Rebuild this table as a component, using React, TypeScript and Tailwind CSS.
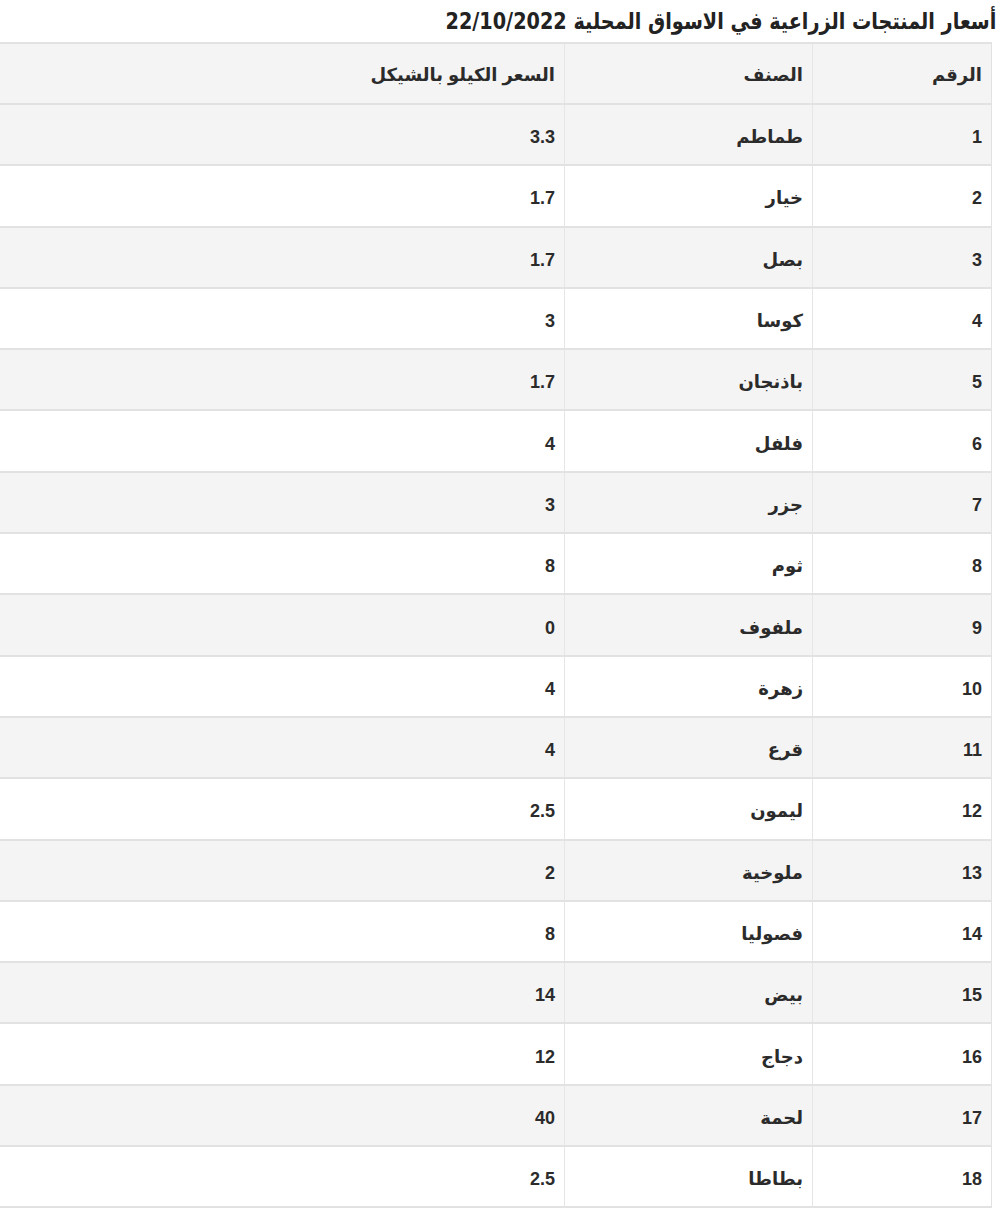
const rows: [number, string, string][] = [
  [1, "طماطم", "3.3"],
  [2, "خيار", "1.7"],
  [3, "بصل", "1.7"],
  [4, "كوسا", "3"],
  [5, "باذنجان", "1.7"],
  [6, "فلفل", "4"],
  [7, "جزر", "3"],
  [8, "ثوم", "8"],
  [9, "ملفوف", "0"],
  [10, "زهرة", "4"],
  [11, "قرع", "4"],
  [12, "ليمون", "2.5"],
  [13, "ملوخية", "2"],
  [14, "فصوليا", "8"],
  [15, "بيض", "14"],
  [16, "دجاج", "12"],
  [17, "لحمة", "40"],
  [18, "بطاطا", "2.5"],
];

const App = () => {
  return (
    <div
      dir="rtl"
      className="w-[1000px] h-[1217px] bg-white overflow-hidden text-[#2b2b2b]"
      style={{ fontFamily: '"Liberation Sans", "DejaVu Sans", sans-serif' }}
    >
      {/* Title */}
      <h1
        className="pr-[4px] pt-[6px] h-[42px] text-[23px] font-bold leading-[30px] text-[#222] origin-right scale-x-[0.93] whitespace-nowrap"
        style={{ fontFamily: '"DejaVu Sans Condensed", "DejaVu Sans", sans-serif' }}
      >
        أسعار المنتجات الزراعية في الاسواق المحلية 22/10/2022
      </h1>

      {/* Prices table */}
      <table className="mr-[8px] w-[992px] border-collapse text-[18px] font-bold">
        <thead>
          <tr className="bg-[#f4f4f4] h-[61px]">
            <th className="w-[179px] border-y-2 border-r border-[#e2e2e2] border-l border-l-[#e6e6e6] px-[9px] pt-[4px] text-right font-bold">
              الرقم
            </th>
            <th className="w-[248px] border-y-2 border-l border-[#e2e2e2] border-l-[#e6e6e6] px-[9px] pt-[4px] text-right font-bold">
              الصنف
            </th>
            <th className="border-y-2 border-[#e2e2e2] px-[9px] pt-[4px] text-right font-bold">
              السعر الكيلو بالشيكل
            </th>
          </tr>
        </thead>
        <tbody>
          {rows.map(([n, name, price]) => (
            <tr key={n} className={n % 2 === 1 ? "bg-[#f4f4f4] h-[61.3px]" : "bg-white h-[61.3px]"}>
              <td className="border-y-2 border-r border-[#e2e2e2] border-l border-l-[#e6e6e6] px-[9px] pt-[6px] text-right">
                {n}
              </td>
              <td className="border-y-2 border-l border-[#e2e2e2] border-l-[#e6e6e6] px-[9px] pt-[6px] text-right">
                {name}
              </td>
              <td className="border-y-2 border-[#e2e2e2] px-[9px] pt-[6px] text-right">{price}</td>
            </tr>
          ))}
        </tbody>
      </table>
    </div>
  );
};

export default App;
